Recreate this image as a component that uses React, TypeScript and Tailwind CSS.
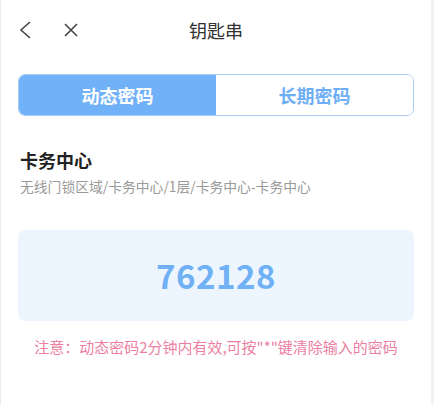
import { useState } from 'react';

const font = { fontFamily: '"Noto Sans CJK SC", "Noto Sans", sans-serif' };

export default function App() {
  const [tab, setTab] = useState<'dynamic' | 'long'>('dynamic');

  return (
    <div className="min-h-[405px] bg-white border-l border-[#ececec] border-r-[3px] border-r-[#f2f2f2]" style={font}>
      {/* header */}
      <div className="relative h-[60px] flex items-center">
        <button className="ml-[15px] w-[18px] h-[20px] flex items-center justify-center text-[#444]">
          <svg width="14" height="20" viewBox="0 0 14 20" fill="none" stroke="currentColor" strokeWidth="1.6">
            <path d="M12 2 L3 10 L12 18" />
          </svg>
        </button>
        <button className="ml-[27px] w-[20px] h-[20px] flex items-center justify-center text-[#444]">
          <svg width="16" height="16" viewBox="0 0 16 16" fill="none" stroke="currentColor" strokeWidth="1.6">
            <path d="M2 2 L14 14 M14 2 L2 14" />
          </svg>
        </button>
        <div className="absolute inset-0 flex items-center justify-center pointer-events-none">
          <span className="text-[18px] text-[#333]">钥匙串</span>
        </div>
      </div>

      <div className="px-[17px]">
        {/* tabs */}
        <div className="mt-[14px] flex h-[42px] rounded-[7px] border border-[#a9cdf2] overflow-hidden">
          <button
            onClick={() => setTab('dynamic')}
            className={`flex-1 text-[18px] font-bold ${tab === 'dynamic' ? 'bg-[#70b1f8] text-white' : 'bg-white text-[#6eaef4]'}`}
          >
            动态密码
          </button>
          <button
            onClick={() => setTab('long')}
            className={`flex-1 text-[18px] font-bold ${tab === 'long' ? 'bg-[#70b1f8] text-white' : 'bg-white text-[#6eaef4]'}`}
          >
            长期密码
          </button>
        </div>

        {/* location */}
        <div className="mt-[31px] pl-[2px]">
          <div className="text-[18px] font-bold text-[#222] leading-[26px]">卡务中心</div>
          <div className="mt-[2px] text-[13.8px] text-[#9a9a9a] leading-[22px]">无线门锁区域/卡务中心/1层/卡务中心-卡务中心</div>
        </div>

        {/* code */}
        <div className="mt-[33px] h-[91px] rounded-[7px] bg-[#edf6ff] flex items-center justify-center">
          <span className="text-[33px] font-bold text-[#70b1f5] tracking-[0.5px]">762128</span>
        </div>

        <div className="mt-[15px] text-center text-[15px] text-[#ec7fa3] leading-[22px]">
          注意：动态密码2分钟内有效,可按"*"键清除输入的密码
        </div>
      </div>
    </div>
  );
}
